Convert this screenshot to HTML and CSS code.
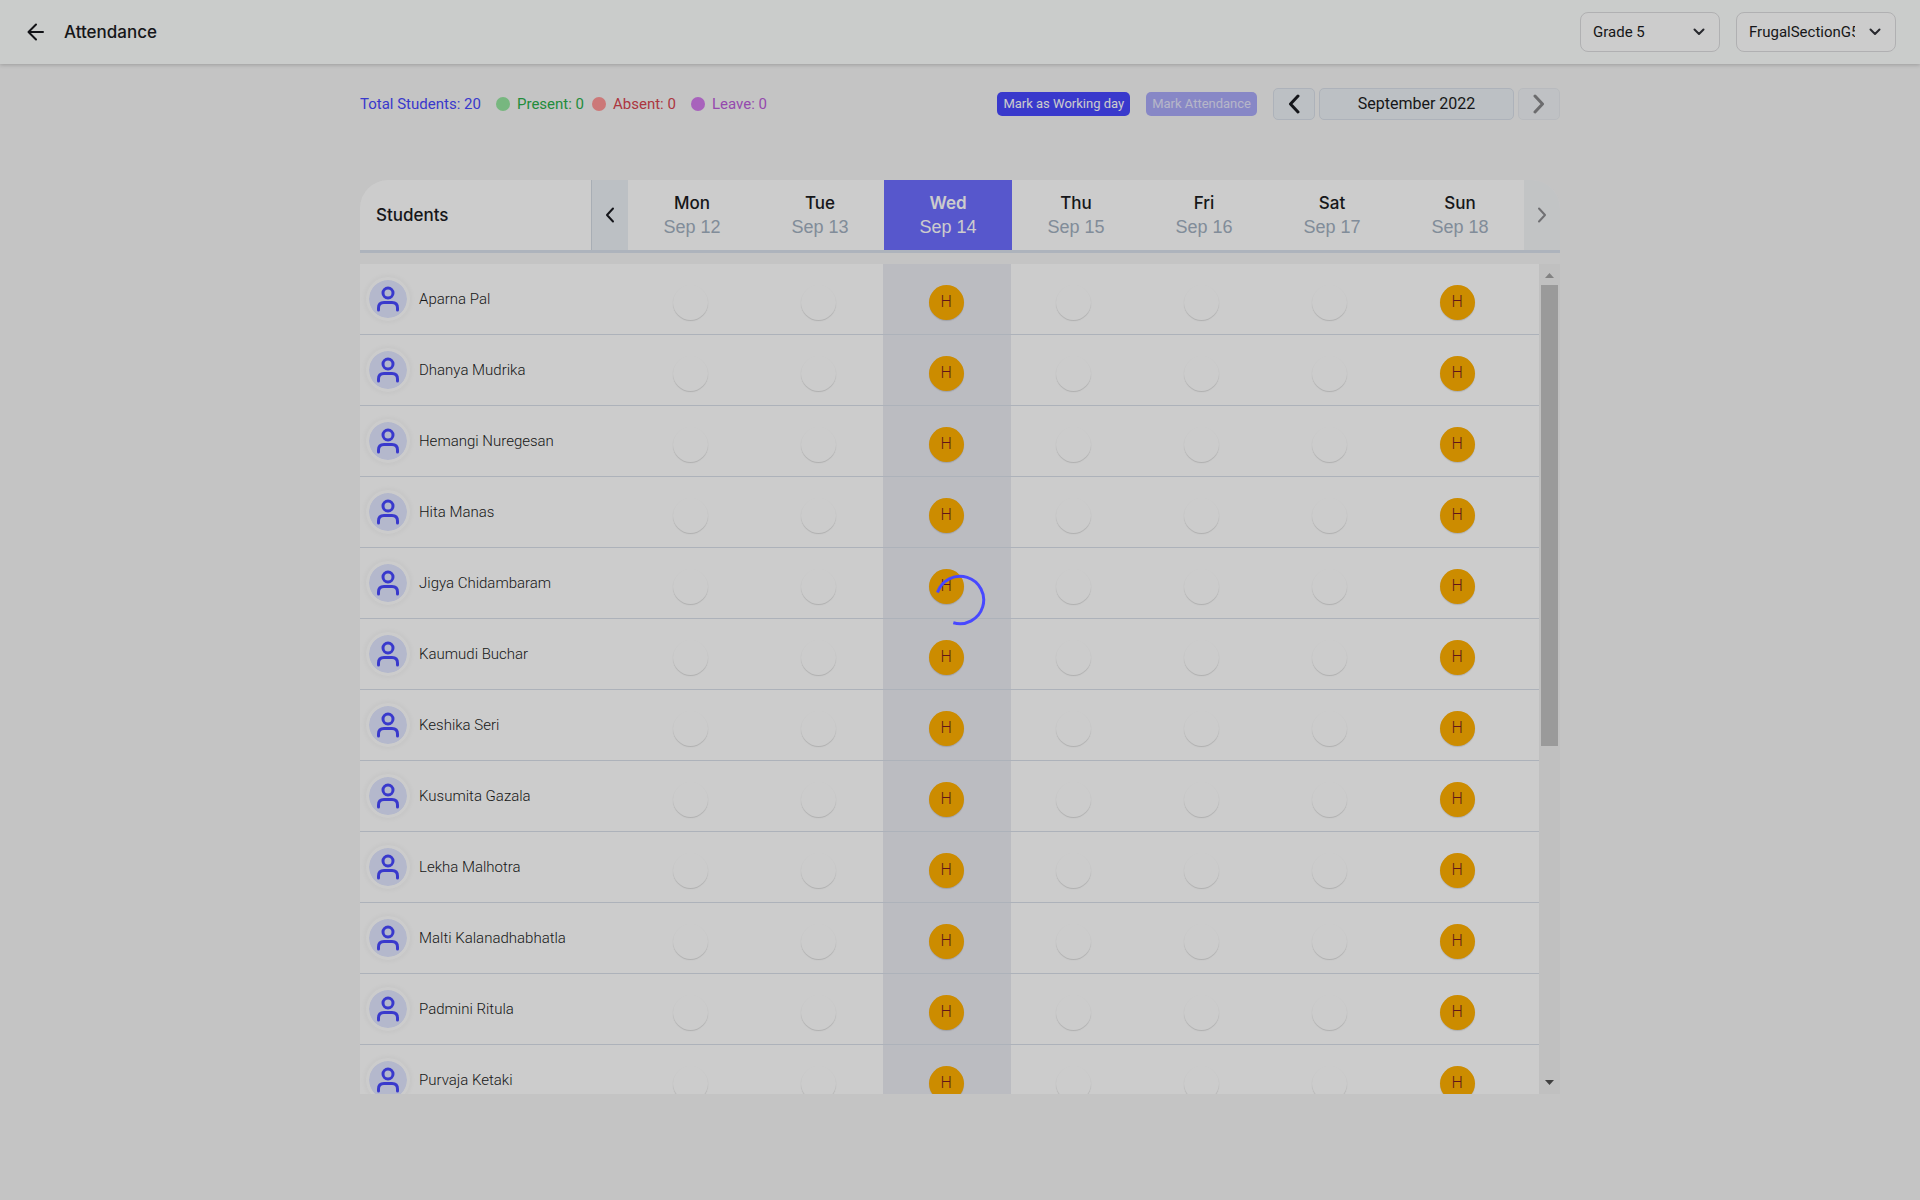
FILE: index.html
```html
<!DOCTYPE html>
<html lang="en">
<head>
<meta charset="utf-8">
<meta name="viewport" content="width=device-width, initial-scale=1">
<title>Attendance</title>
<link rel="stylesheet" href="styles.css">
</head>
<body>
<header class="topbar">
  <a class="back" href="#" aria-label="Back"><svg width="18" height="18" viewBox="0 0 18 18"><path d="M16 9H2M9 1.500L1.500 9L9 16.500"/></svg></a>
  <h1 class="title">Attendance</h1>
  <div class="pickers">
    <div class="picker picker-grade">
      <select aria-label="Grade"><option>Grade 5</option></select>
      <svg width="12" height="8" viewBox="0 0 12 8"><path d="M1.500 1.500L6 6L10.500 1.500"/></svg>
    </div>
    <div class="picker picker-section">
      <select aria-label="Section"><option>FrugalSectionG5</option></select>
      <svg width="12" height="8" viewBox="0 0 12 8"><path d="M1.500 1.500L6 6L10.500 1.500"/></svg>
    </div>
  </div>
</header>

<main class="page">
  <div class="toolbar">
    <ul class="summary">
      <li class="total">Total Students: 20</li>
      <li class="present">Present: 0</li>
      <li class="absent">Absent: 0</li>
      <li class="leave">Leave: 0</li>
    </ul>
    <div class="actions">
      <button class="mark" type="button">Mark as Working day</button>
      <button class="mark mark-disabled" type="button" disabled>Mark Attendance</button>
      <div class="months">
        <button class="month-step" type="button" aria-label="Previous month"><svg width="12" height="20" viewBox="0 0 12 20"><path d="M10 2L2.500 10L10 18"/></svg></button>
        <button class="month" type="button">September 2022</button>
        <button class="month-step" type="button" aria-label="Next month" disabled><svg width="12" height="20" viewBox="0 0 12 20"><path d="M2 2L9.500 10L2 18"/></svg></button>
      </div>
    </div>
  </div>

  <table class="week">
    <thead>
      <tr>
        <th class="students" scope="col">Students</th>
        <td class="step"><button type="button" aria-label="Previous week"><svg width="10" height="16" viewBox="0 0 10 16"><path d="M8 1.500L2 8L8 14.500"/></svg></button></td>
        <th class="day" scope="col">Mon<span>Sep 12</span></th>
        <th class="day" scope="col">Tue<span>Sep 13</span></th>
        <th class="day today" scope="col">Wed<span>Sep 14</span></th>
        <th class="day" scope="col">Thu<span>Sep 15</span></th>
        <th class="day" scope="col">Fri<span>Sep 16</span></th>
        <th class="day" scope="col">Sat<span>Sep 17</span></th>
        <th class="day" scope="col">Sun<span>Sep 18</span></th>
        <td class="step step-next"><button type="button" aria-label="Next week" disabled><svg width="10" height="16" viewBox="0 0 10 16"><path d="M2 1.500L8 8L2 14.500"/></svg></button></td>
      </tr>
    </thead>
  </table>

  <div class="roster">
    <table class="rows" aria-label="Attendance by student"><tbody id="rows"></tbody></table>
    <div class="scrollbar" aria-hidden="true">
      <svg class="arrow arrow-up" viewBox="0 0 21 21"><path d="M6 14H15L10.500 9Z"/></svg>
      <div class="track"><div class="thumb"></div></div>
      <svg class="arrow" viewBox="0 0 21 21"><path d="M6 7H15L10.500 12Z"/></svg>
    </div>
  </div>
</main>

<div class="loading" role="status" aria-label="Loading">
  <svg width="52" height="52" viewBox="-26 -26 52 52"><path d="M-22.500 -7.500A23.700 23.700 0 1 1 -6.700 22.700"/></svg>
</div>

<script src="roster.js"></script>
</body>
</html>
```
FILE: roster.js
```js
const students = [
  'Aparna Pal', 'Dhanya Mudrika', 'Hemangi Nuregesan', 'Hita Manas',
  'Jigya Chidambaram', 'Kaumudi Buchar', 'Keshika Seri', 'Kusumita Gazala',
  'Lekha Malhotra', 'Malti Kalanadhabhatla', 'Padmini Ritula', 'Purvaja Ketaki'
];
const days = ['Mon', 'Tue', 'Wed', 'Thu', 'Fri', 'Sat', 'Sun'];
const holidays = ['Wed', 'Sun'];
const avatar = '<span class="avatar"><svg width="24" height="26" viewBox="0 0 24 26">' +
  '<circle cx="12" cy="7" r="5"/><path d="M2.500 24V22Q2.500 16.500 8 16.500H16Q21.500 16.500 21.500 22V24"/></svg></span>';

document.getElementById('rows').innerHTML = students.map(name =>
  `<tr><th class="student" scope="row">${avatar}<span>${name}</span></th>` +
  days.map(day => {
    const off = holidays.includes(day);
    return `<td class="mark-cell${day === 'Wed' ? ' today-cell' : ''}">` +
      `<span class="status${off ? ' holiday' : ''}">${off ? 'H' : ''}</span></td>`;
  }).join('') + '</tr>'
).join('');
```
FILE: styles.css
```css
* {
  box-sizing: border-box;
}

body {
  margin: 0;
  min-height: 100vh;
  background: #f5f5f5;
  color: #1b1c22;
  font: 400 15px/20px Roboto, "Liberation Sans", sans-serif;
}

button,
select {
  font: inherit;
  color: inherit;
}

svg {
  fill: none;
  stroke: currentColor;
  stroke-width: 2;
  stroke-linecap: round;
  stroke-linejoin: round;
}

table {
  display: block;
}

th,
td {
  padding: 0;
  font-weight: inherit;
}

.topbar {
  display: flex;
  align-items: center;
  height: 64px;
  padding: 0 24px 0 27px;
  background: #fdfffe;
  box-shadow: 0 1px 4px rgba(0, 0, 0, 0.2);
}

.back {
  display: flex;
  margin-right: 19px;
  color: #16171c;
}

.title {
  margin: 0;
  font: 500 17px/24px Inter, "Liberation Sans", sans-serif;
}

.pickers {
  display: flex;
  gap: 16px;
  margin-left: auto;
}

.picker {
  display: grid;
  grid-template-columns: 1fr 36px;
  align-items: center;
  height: 40px;
}

.picker-grade {
  width: 140px;
}

.picker-section {
  width: 160px;
}

.picker select {
  grid-area: 1 / 1 / 2 / 3;
  width: 100%;
  height: 40px;
  padding: 0 40px 0 12px;
  border: 1px solid #dddddf;
  border-radius: 8px;
  background: #fff;
  appearance: none;
  text-overflow: clip;
}

.picker svg {
  grid-area: 1 / 2;
  margin-left: 9px;
  color: #33343a;
  pointer-events: none;
}

.page {
  max-width: 1200px;
  margin: 0 auto;
  padding-top: 24px;
}

.toolbar {
  display: flex;
  justify-content: space-between;
  align-items: center;
  height: 32px;
  margin-bottom: 60px;
}

.summary {
  display: flex;
  margin: 0;
  padding: 0;
  list-style: none;
}

.summary li {
  display: flex;
  align-items: center;
}

.summary li:not(.total)::before {
  content: "";
  width: 14px;
  height: 14px;
  margin-right: 7px;
  border-radius: 50%;
  background: var(--dot);
}

.total {
  width: 136px;
  color: #4848ff;
}

.present {
  --dot: #95e59f;
  width: 96px;
  color: #2bb04c;
}

.absent {
  --dot: #ff9696;
  width: 99px;
  color: #d84450;
}

.leave {
  --dot: #d27bec;
  color: #bb5cda;
}

.actions {
  display: flex;
  align-items: center;
  gap: 16px;
}

.mark {
  height: 24px;
  padding: 0 6px;
  border: 0;
  border-radius: 5px;
  background: #4848ff;
  color: #fff;
  font-size: 13px;
}

.mark-disabled {
  background: #a9a9f8;
  color: #e4e4fb;
}

.months {
  display: flex;
  gap: 4px;
}

.months button {
  height: 32px;
  padding: 0;
  border: 1px solid #d9dfe9;
  border-radius: 5px;
  background: #ebf1f5;
}

.months .month {
  width: 195px;
  font-size: 16px;
}

.months .month-step {
  display: flex;
  align-items: center;
  justify-content: center;
  width: 42px;
}

.month-step svg {
  stroke-width: 3;
}

.month-step:disabled {
  opacity: 0.5;
}

.week {
  overflow: hidden;
  border-radius: 28px 28px 0 0;
  border-bottom: 3px solid #d9e0eb;
  background: #fff;
}

.week thead,
.rows tbody {
  display: block;
}

.week tr {
  display: grid;
  grid-template-columns: 231px 37px repeat(7, 1fr) 36px;
  height: 70px;
}

.students,
.day {
  font: 500 17px/24px Inter, "Liberation Sans", sans-serif;
}

.students {
  padding: 23px 16px;
  text-align: left;
}

.step {
  border-left: 1px solid #d3dae3;
  background: #ebf1f5;
}

.step button {
  display: flex;
  align-items: center;
  justify-content: center;
  width: 100%;
  height: 100%;
  padding: 0;
  border: 0;
  background: none;
}

.step-next {
  border-left: 0;
  opacity: 0.5;
  background: #e8ecf0;
}

.day {
  padding-top: 11px;
  text-align: center;
}

.day span {
  display: block;
  color: #a2afc0;
  font: 400 18px/24px "Liberation Sans", Arial, sans-serif;
}

.today {
  background: #6d6dff;
  color: #fff;
  font-weight: 600;
}

.today span {
  color: #fff;
}

.roster {
  display: grid;
  grid-template-columns: 1fr 21px;
  height: 830px;
  margin-top: 11px;
  overflow: hidden;
}

.rows {
  background: #fff;
}

.rows tr {
  display: grid;
  grid-template-columns: 268px repeat(7, 1fr) 17px;
  height: 71px;
  border-bottom: 1px solid #d9dfe9;
}

.student {
  display: flex;
  align-items: center;
  gap: 9px;
  padding-left: 6px;
  font-weight: 300;
}

.avatar {
  display: flex;
  align-items: center;
  justify-content: center;
  width: 44px;
  height: 44px;
  border: 3px solid #fff;
  border-radius: 50%;
  background: #e1e7ff padding-box;
  box-shadow: 0 0 6px rgba(0, 0, 0, 0.06);
  color: #4848ff;
}

.avatar svg {
  stroke-width: 3;
}

.mark-cell {
  display: flex;
  justify-content: center;
  padding: 21px 2px 0 0;
}

.today-cell {
  background: #eaebf2;
}

.status {
  width: 35px;
  height: 35px;
  border-radius: 50%;
  background: #fff;
  box-shadow: 0 1px 1px rgba(0, 0, 0, 0.14);
  text-align: center;
  font-weight: 300;
  font-size: 16px;
  line-height: 34px;
}

.holiday {
  background: #ffaf00;
  color: #7a1c20;
}

.scrollbar {
  display: flex;
  flex-direction: column;
  height: 830px;
  background: #f1f1f1;
}

.arrow {
  flex: none;
  height: 21px;
  fill: #505050;
  stroke: none;
}

.arrow-up {
  fill: #a3a3a3;
}

.track {
  flex: 1;
  padding: 0 2px;
}

.thumb {
  height: 461px;
  background: #c1c1c1;
}

.loading {
  position: fixed;
  inset: 0;
  display: flex;
  align-items: center;
  justify-content: center;
  background: rgba(0, 0, 0, 0.2);
}

.loading svg {
  color: #4848ff;
  stroke-width: 3;
  stroke-linecap: butt;
}
```
